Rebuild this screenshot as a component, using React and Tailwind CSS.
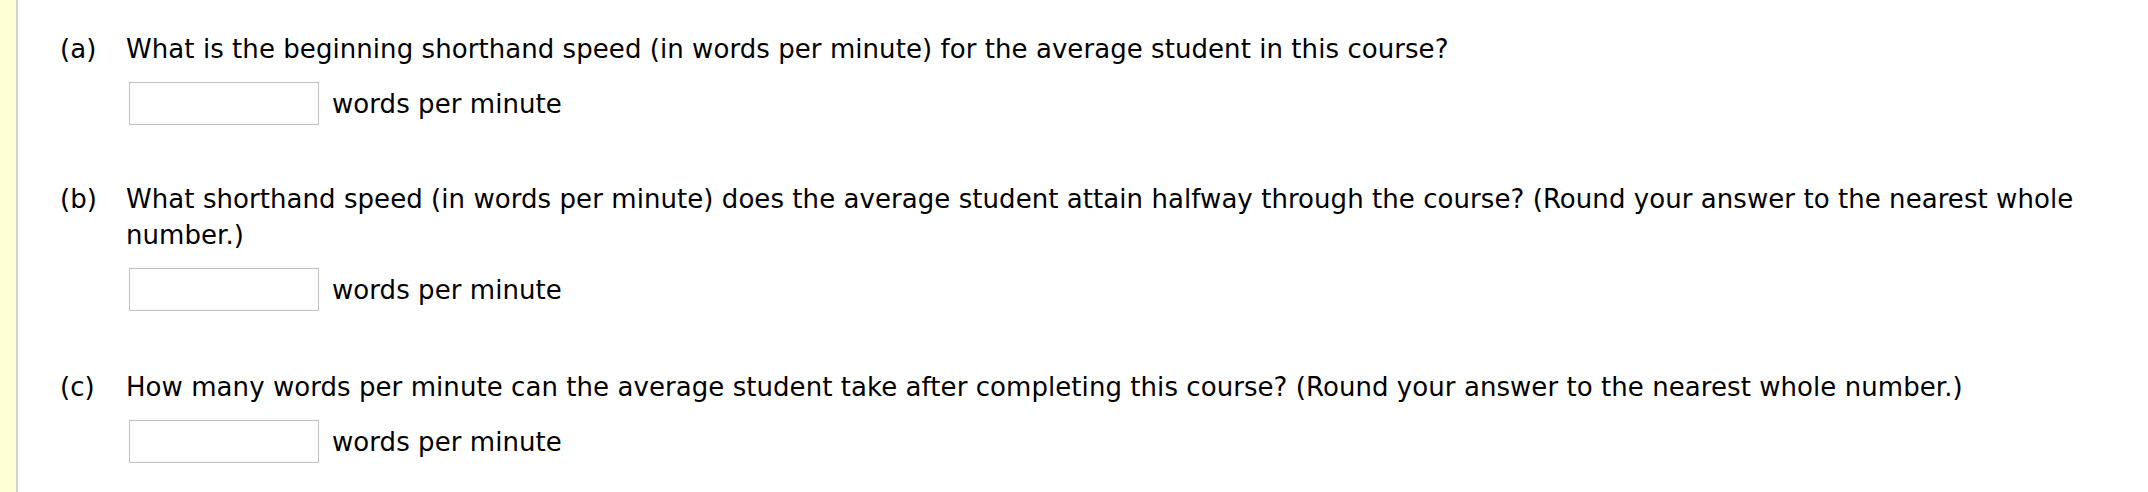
import React from "react";

const parts = [
  {
    label: "(a)",
    text: "What is the beginning shorthand speed (in words per minute) for the average student in this course?",
    gap: "mt-0",
  },
  {
    label: "(b)",
    text: "What shorthand speed (in words per minute) does the average student attain halfway through the course? (Round your answer to the nearest whole number.)",
    gap: "mt-[56px]",
  },
  {
    label: "(c)",
    text: "How many words per minute can the average student take after completing this course? (Round your answer to the nearest whole number.)",
    gap: "mt-[58px]",
  },
];

const Part = ({ label, text, gap }) => (
  <div className={gap}>
    <div className="flex">
      <span className="w-[66px] shrink-0">{label}</span>
      <p className="flex-1">{text}</p>
    </div>
    <div className="mt-[15px] flex items-center pl-[69px]">
      <input
        type="text"
        className="h-[43px] w-[190px] border border-[#c2c2c2] bg-white outline-none"
      />
      <span className="ml-[13px]">words per minute</span>
    </div>
  </div>
);

export default function App() {
  return (
    <div className="flex h-[492px] overflow-hidden bg-white text-[26px] leading-[36px] tracking-[0.06px] text-black font-['DejaVu_Sans',Verdana,sans-serif]">
      <div className="w-[18px] shrink-0 border-r-2 border-[#d2d2d2] bg-[#ffffd6]" />
      <div className="flex-1 pl-[42px] pr-[40px] pt-[31px]">
        {parts.map((p) => (
          <Part key={p.label} {...p} />
        ))}
      </div>
    </div>
  );
}
